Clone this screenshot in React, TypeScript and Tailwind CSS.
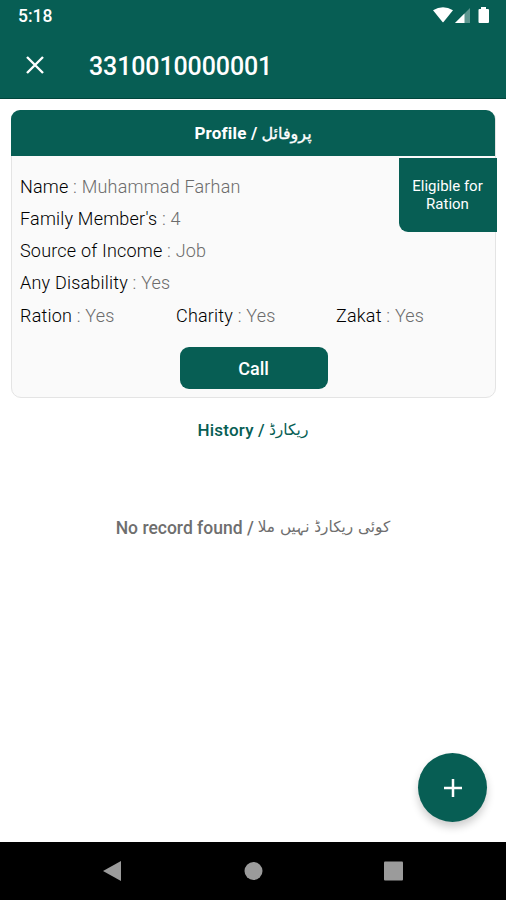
import type { ReactNode } from "react";

function Urdu({ children, className = "" }: { children: ReactNode; className?: string }) {
  return (
    <span lang="ur" dir="rtl" className={`inline-block leading-none font-normal font-['DejaVu_Sans',sans-serif] ${className}`}>
      {children}
    </span>
  );
}

function Field({ label, value, className = "" }: { label: string; value: string; className?: string }) {
  return (
    <div className={`whitespace-nowrap text-[18px] font-light leading-[32.3px] tracking-[0.2px] text-black ${className}`}>
      {label} <span className="text-[#6c6c6c]">: {value}</span>
    </div>
  );
}

function Header() {
  return (
    <header className="h-[99px] shrink-0 border-b border-[#00463c] bg-[#075e54] text-white">
      <div className="flex h-8 items-center justify-between pl-[18px] pr-[16px]">
        <span className="pt-px text-[17.5px] font-medium">5:18</span>
        <svg width="57" height="18" viewBox="0 0 57 18" fill="white">
          <path d="M0 3.2Q10 -2.8 20 3.2L10.5 15Q10 15.5 9.5 15Z" />
          <path d="M22 16L37 1V16Z" opacity="0.35" />
          <path d="M22 16L31.500 6.500V16Z" />
          <path d="M48 0H53V2H55Q56 2 56 3V15Q56 16 55 16H46.500Q45.500 16 45.500 15V3Q45.500 2 46.500 2H48Z" />
        </svg>
      </div>
      <div className="flex h-[66px] items-center pl-[26px]">
        <svg width="18" height="18" viewBox="0 0 18 18" stroke="white" strokeWidth="2.4" fill="none">
          <path d="M1 1L17 17M17 1L1 17" />
        </svg>
        <h1 className="ml-[45px] pt-[3px] text-[25px] font-medium tracking-[-0.12px]">3310010000001</h1>
      </div>
    </header>
  );
}

function ProfileCard() {
  return (
    <section className="relative ml-[11px] mr-[10px] mt-[11px] h-[288px] rounded-[10px] border border-[#e4e4e4] bg-[#fafafa]">
      <h2 className="-ml-px -mt-px flex h-[46px] items-center justify-center gap-1 rounded-t-[9px] bg-[#075e54] pt-[2px] text-[17px] font-bold text-white">
        <span className="tracking-[0.2px]">Profile /</span>
        <Urdu className="text-[16px] [-webkit-text-stroke:0.35px_currentColor]">پروفائل</Urdu>
      </h2>
      <div className="absolute -right-[1.5px] top-[47px] flex h-[74px] w-[98px] items-center justify-center rounded-bl-[9px] bg-[#075e54] text-center text-[15px] leading-[18px] text-white">
        Eligible for
        <br />
        Ration
      </div>
      <div className="pl-[8px] pt-[14.5px]">
        <Field label="Name" value="Muhammad Farhan" />
        <Field label="Family Member's" value="4" />
        <Field label="Source of Income" value="Job" />
        <Field label="Any Disability" value="Yes" />
        <div className="flex">
          <Field className="w-[156px]" label="Ration" value="Yes" />
          <Field className="w-[160px]" label="Charity" value="Yes" />
          <Field label="Zakat" value="Yes" />
        </div>
      </div>
      <button className="mx-auto mt-[15.5px] block h-[42px] w-[148px] rounded-[9px] bg-[#075e54] text-[18px] font-medium text-white">
        Call
      </button>
    </section>
  );
}

export default function App() {
  return (
    <div className="flex h-[900px] w-[506px] flex-col overflow-hidden bg-white font-['Roboto',sans-serif]">
      <Header />
      <main className="flex flex-1 flex-col">
        <ProfileCard />
        <h2 className="mt-[21px] flex h-6 items-center justify-center gap-1 text-[17px] font-medium text-[#075e54]">
          <span className="tracking-[0.2px]">History /</span>
          <Urdu className="text-[15.5px]">ریکارڈ</Urdu>
        </h2>
        <p className="mt-[73px] flex h-6 items-center justify-center gap-1 text-[17.5px] font-medium text-[#6e6e6e]">
          <span>No record found /</span>
          <Urdu className="text-[15.3px]">کوئی ریکارڈ نہیں ملا</Urdu>
        </p>
        <button
          aria-label="Add"
          className="mb-5 ml-auto mr-[19px] mt-auto flex size-[69px] items-center justify-center rounded-full bg-[#075e54] shadow-[0_5px_8px_rgba(0,0,0,0.2)]"
        >
          <svg width="18" height="18" viewBox="0 0 18 18" stroke="white" strokeWidth="2.5">
            <path d="M9 0V18M0 9H18" />
          </svg>
        </button>
      </main>
      <nav className="flex h-[58px] shrink-0 items-center bg-black pl-[103px]">
        <svg width="301" height="22" viewBox="0 0 301 22" fill="#9b9b9b">
          <path d="M0 11L18 1V21Z" />
          <circle cx="150.500" cy="11" r="9" />
          <rect x="281" y="1.500" width="19" height="19" rx="1" />
        </svg>
      </nav>
    </div>
  );
}
